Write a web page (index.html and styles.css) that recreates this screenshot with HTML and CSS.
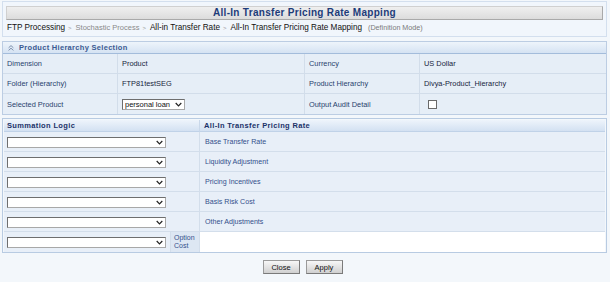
FILE: index.html
```html
<!DOCTYPE html>
<html>
<head>
<meta charset="utf-8">
<title>All-In Transfer Pricing Rate Mapping</title>
<link rel="stylesheet" href="styles.css">
</head>
<body>
<div class="page">
  <div class="titlebox">
    <div class="titlebar">All-In Transfer Pricing Rate Mapping</div>
    <div class="crumbs">
      <span class="c-main">FTP Processing</span><span class="sep">&gt;</span><span class="c-muted">Stochastic Process</span><span class="sep">&gt;</span><span class="c-main">All-in Transfer Rate</span><span class="sep">&gt;</span><span class="c-main">All-In Transfer Pricing Rate Mapping</span><span class="mode">(Definition Mode)</span>
    </div>
  </div>

  <section class="panel">
    <div class="panel-head">
      <svg class="collapse" viewBox="0 0 6 6" width="6" height="6"><polyline points="0.6,2.8 3,0.6 5.4,2.8"/><polyline points="0.6,5.4 3,3.2 5.4,5.4"/></svg>
      <span>Product Hierarchy Selection</span>
    </div>
    <table class="props">
      <colgroup><col class="pc1"><col class="pc2"><col class="pc3"><col></colgroup>
      <tr><td class="lbl">Dimension</td><td class="val">Product</td><td class="lbl">Currency</td><td class="val last">US Dollar</td></tr>
      <tr><td class="lbl">Folder (Hierarchy)</td><td class="val">FTP81testSEG</td><td class="lbl">Product Hierarchy</td><td class="val last">Divya-Product_Hierarchy</td></tr>
      <tr class="endrow"><td class="lbl">Selected Product</td><td class="val"><span class="sel small"><select><option>personal loan</option></select><svg viewBox="0 0 8 5"><polyline points="0.8,0.8 4,4 7.2,0.8"/></svg></span></td><td class="lbl">Output Audit Detail</td><td class="val last"><input type="checkbox" class="chk"></td></tr>
    </table>
  </section>

  <table class="mapping">
    <colgroup><col class="mc1"><col class="mc2"><col></colgroup>
    <tr><th colspan="2">Summation Logic</th><th class="th2">All-In Transfer Pricing Rate</th></tr>
    <tr><td colspan="2" class="selcell"><span class="sel"><select><option></option></select><svg viewBox="0 0 8 5"><polyline points="0.8,0.8 4,4 7.2,0.8"/></svg></span></td><td class="name">Base Transfer Rate</td></tr>
    <tr><td colspan="2" class="selcell"><span class="sel"><select><option></option></select><svg viewBox="0 0 8 5"><polyline points="0.8,0.8 4,4 7.2,0.8"/></svg></span></td><td class="name">Liquidity Adjustment</td></tr>
    <tr><td colspan="2" class="selcell"><span class="sel"><select><option></option></select><svg viewBox="0 0 8 5"><polyline points="0.8,0.8 4,4 7.2,0.8"/></svg></span></td><td class="name">Pricing Incentives</td></tr>
    <tr><td colspan="2" class="selcell"><span class="sel"><select><option></option></select><svg viewBox="0 0 8 5"><polyline points="0.8,0.8 4,4 7.2,0.8"/></svg></span></td><td class="name">Basis Risk Cost</td></tr>
    <tr><td colspan="2" class="selcell"><span class="sel"><select><option></option></select><svg viewBox="0 0 8 5"><polyline points="0.8,0.8 4,4 7.2,0.8"/></svg></span></td><td class="name">Other Adjustments</td></tr>
    <tr class="endrow"><td class="selcell"><span class="sel"><select><option></option></select><svg viewBox="0 0 8 5"><polyline points="0.8,0.8 4,4 7.2,0.8"/></svg></span></td><td class="opt">Option Cost</td><td class="blank"></td></tr>
  </table>

  <div class="actions">
    <button class="btn" type="button">Close</button>
    <button class="btn" type="button">Apply</button>
  </div>
</div>
</body>
</html>
```

FILE: styles.css
```css
* { box-sizing: border-box; }

body {
  margin: 0;
  background: #f3f7fb;
  font-family: "Liberation Sans", Arial, sans-serif;
  color: #1c2a45;
}

.page {
  padding: 1px 3px 0 2px;
}

/* ---------- title box ---------- */
.titlebox {
  height: 36px;
  border: 1px solid #d3dfee;
  background: #f1f6fc;
  padding: 4px 3px 0;
}

.titlebar {
  height: 14px;
  background: linear-gradient(#efefef, #dcdcdc);
  border: 1px solid #d0d0d0;
  border-right-color: #a9a9a9;
  border-bottom-color: #a9a9a9;
  text-align: center;
  font-weight: bold;
  font-size: 10px;
  line-height: 12px;
  letter-spacing: 0.3px;
  color: #1d3c7a;
}

.crumbs {
  display: flex;
  align-items: baseline;
  padding: 1px 0 0 1px;
  line-height: 13px;
  white-space: nowrap;
}

.c-main { font-size: 8.2px; color: #111; }
.c-muted { font-size: 7.5px; color: #8a8a8a; }
.sep { font-size: 6px; color: #9a9a9a; margin: 0 4px 0 3px; }
.mode { font-size: 7.2px; color: #7a7a7a; margin-left: 6px; }

/* ---------- product hierarchy panel ---------- */
.panel {
  margin-top: 4px;
  border: 1px solid #bccde3;
  background: #f3f7fb;
}

.panel-head {
  height: 12px;
  display: flex;
  align-items: center;
  gap: 5px;
  padding-left: 5px;
  background: linear-gradient(#eef4fb, #d5e3f3);
  border-bottom: 1px solid #a3bcdb;
  font-weight: bold;
  font-size: 7.5px;
  letter-spacing: 0.3px;
  color: #3b5a92;
}

.collapse {
  fill: none;
  stroke: #7d8fab;
  stroke-width: 1;
}

.props {
  width: 100%;
  table-layout: fixed;
  border-collapse: separate;
  border-spacing: 0;
}

.pc1 { width: 115px; }
.pc2 { width: 187px; }
.pc3 { width: 115px; }

.props td {
  height: 20px;
  padding: 0 4px;
  background: #e6eef7;
  border-right: 1px solid #d2ddea;
  border-bottom: 1px solid #d2ddea;
  font-size: 7.4px;
  white-space: nowrap;
  vertical-align: middle;
}

.props td.last { border-right: none; }
.props .endrow td { border-bottom: none; }

.props .lbl { color: #283f6d; }
.props .val { color: #17243d; }

/* ---------- selects ---------- */
.sel {
  position: relative;
  display: inline-block;
  vertical-align: middle;
}

.sel select {
  appearance: none;
  -webkit-appearance: none;
  display: block;
  width: 159px;
  height: 11px;
  margin: 0;
  padding: 0 0 0 2px;
  border: 1px solid #7a7a7a;
  border-color: #6e6e6e #a8a8a8 #a8a8a8 #6e6e6e;
  border-radius: 0;
  background: #fff;
  font-family: "Liberation Sans", Arial, sans-serif;
  font-size: 7.5px;
  line-height: 9px;
  color: #111;
}

.sel.small select { width: 63px; }

.sel svg {
  position: absolute;
  right: 3px;
  top: 3px;
  width: 7px;
  height: 5px;
  fill: none;
  stroke: #222;
  stroke-width: 1.4;
  pointer-events: none;
}

.chk {
  appearance: none;
  -webkit-appearance: none;
  display: inline-block;
  vertical-align: middle;
  width: 9px;
  height: 9px;
  margin: 0 0 0 4px;
  border: 1px solid #6a6a6a;
  border-radius: 0;
  background: #fff;
}

/* ---------- mapping table ---------- */
.mapping {
  width: 100%;
  margin-top: 3px;
  table-layout: fixed;
  border-collapse: separate;
  border-spacing: 0;
  border: 1px solid #b8cbe2;
  padding: 1px 1px 0;
  background: #f3f7fb;
}

.mc1 { width: 166px; }
.mc2 { width: 29px; }

.mapping th {
  height: 12px;
  padding: 0 0 0 3px;
  text-align: left;
  background: linear-gradient(#eef4fb, #d3e1f2);
  border-bottom: 1px solid #c0d2e8;
  font-weight: bold;
  font-size: 7.5px;
  letter-spacing: 0.35px;
  color: #1b3168;
  white-space: nowrap;
}

.mapping th.th2 {
  padding-left: 4px;
  border-left: 1px solid #c9d8ea;
}

.mapping td {
  height: 20px;
  background: #e8eff8;
  border-bottom: 1px solid #d3deeb;
  vertical-align: middle;
}

.mapping .endrow td { border-bottom: none; }

.mapping td.selcell { padding: 0 0 0 3px; }

.mapping td.name {
  padding-left: 5px;
  border-left: 1px solid #d3deeb;
  font-size: 7.1px;
  color: #34508c;
  white-space: nowrap;
}

.mapping td.opt {
  padding: 0 0 0 3px;
  background: #dde7f3;
  border-left: 1px solid #d3deeb;
  font-size: 7px;
  line-height: 8px;
  color: #34508c;
}

.mapping td.blank {
  background: #fff;
  border-left: 1px solid #d3deeb;
}

/* ---------- buttons ---------- */
.actions {
  display: flex;
  justify-content: center;
  gap: 6px;
  margin-top: 7px;
  padding-right: 4px;
}

.btn {
  width: 37px;
  height: 14px;
  padding: 0;
  margin: 0;
  font-family: "Liberation Sans", Arial, sans-serif;
  font-size: 7.5px;
  color: #111;
  background: linear-gradient(#f7f7f7, #d0d0d0);
  border: 1px solid #9a9a9a;
  border-right-color: #7a7a7a;
  border-bottom-color: #7a7a7a;
  border-radius: 0;
}
```
